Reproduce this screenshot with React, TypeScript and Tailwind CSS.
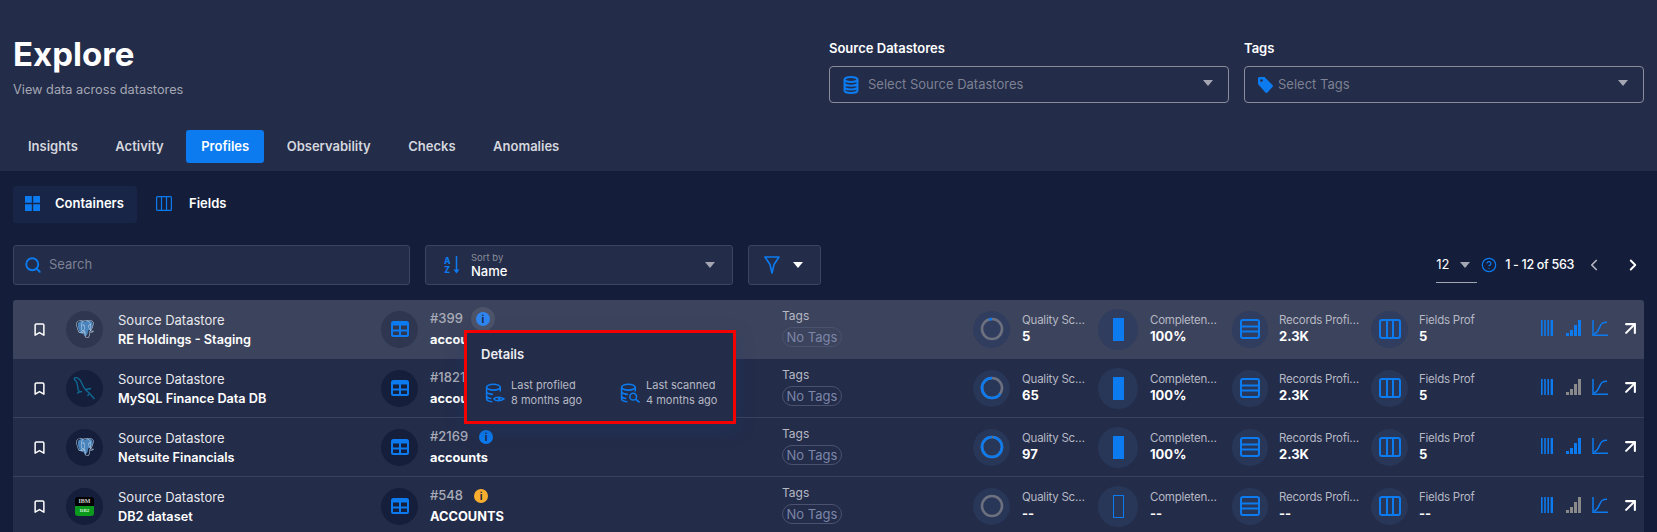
import { Bookmark, ChevronLeft, ChevronRight, CircleHelp, Search, ArrowUpRight } from 'lucide-react';
import { SiPostgresql } from 'react-icons/si';
import { ReactNode } from 'react';

const font = { fontFamily: 'Inter, sans-serif' };

function Caret({ className = 'border-t-[#a4a7b3]' }: { className?: string }) {
  return <span className={`inline-block w-0 h-0 border-x-[5px] border-x-transparent border-t-[6px] ${className}`} />;
}

function Db2Logo() {
  return (
    <div className="w-[19px] h-[19px] rounded-[3px] overflow-hidden flex flex-col text-center font-bold leading-[9px] font-['Liberation_Serif',serif]">
      <div className="h-[9px] bg-black text-[6px] text-[#cfcfcf]">IBM</div>
      <div className="h-[10px] bg-[#0b9a1e] text-[5px] text-[#d8f0d8]">DB2</div>
    </div>
  );
}

function PostgresLogo() {
  return (
    <div className="relative w-[18px] h-[18px]">
      <svg width="18" height="18" viewBox="0 0 18 18" fill="#4a84bd" className="absolute inset-0">
        <path d="M2 3c2-2.500 5-2.500 7-1.500 2-1 5-1 7 .5 1.500 2 .5 5-1 7-1 1-2 1.500-3 1.500 0 2.500-.5 5-2.500 5.500-1.500 0-2-1.500-2-3-1 1-2.500 1-3.500-.5-1.500-2-2.500-6-2-9.500z" />
      </svg>
      <SiPostgresql size={18} color="#b9cfe4" className="absolute inset-0" />
    </div>
  );
}

function MysqlLogo() {
  return (
    <svg width="23" height="24" viewBox="0 0 23 24" fill="none" stroke="#0f6a94" strokeWidth="1.300">
      <path d="M1 2.500C2.500 .8 5 1.500 7 4c2 2.500 2.500 6 5 9 1.500 2 4 3.500 5.500 5.500l4 4.500" />
      <path d="M1 2.500c.500 1.500 2 2 2.800 4 1 3 .7 6 2.200 9.500M6 16l-1.800 1.500M6 16l3-.5" />
      <path d="M13 13.500l5-1M16 18l-1.500 2" />
    </svg>
  );
}

function TableIcon() {
  return (
    <svg width="18" height="16" viewBox="0 0 18 16" fill="none" stroke="#0c7bf0" strokeWidth="2">
      <rect x="1" y="1" width="16" height="14" rx="1.500" />
      <path d="M1 3h16" strokeWidth="3" />
      <path d="M1 9.500h16M9 4v11" />
    </svg>
  );
}

function RecordsIcon() {
  return (
    <svg width="20" height="20" viewBox="0 0 20 20" fill="none" stroke="#0c7bf0" strokeWidth="2">
      <rect x="1" y="1" width="18" height="18" rx="2" />
      <path d="M1 7.500h18M1 12.500h18" />
    </svg>
  );
}

function ColumnsIcon() {
  return (
    <svg width="22" height="20" viewBox="0 0 22 20" fill="none" stroke="#0c7bf0" strokeWidth="2">
      <rect x="1" y="1" width="20" height="18" rx="2" />
      <path d="M8 1v18M14 1v18" />
    </svg>
  );
}

function Ring({ value }: { value: number }) {
  const c = 2 * Math.PI * 10;
  return (
    <svg width="24" height="24" viewBox="0 0 24 24" fill="none" strokeWidth="2.600">
      <circle cx="12" cy="12" r="10" stroke="#6d717f" />
      <circle cx="12" cy="12" r="10" stroke="#0c7bf0" strokeDasharray={`${(c * value) / 100} ${c}`} transform="rotate(-90 12 12) scale(1 -1) translate(0 -24)" />
    </svg>
  );
}

function Stat({ icon, label, value, circle, text, clip }: { icon: ReactNode; label: string; value: string; circle: string; text: string; clip?: boolean }) {
  return (
    <div className="flex items-center shrink-0 w-full">
      <div className={`rounded-full bg-[#2b3a5f]/70 flex items-center justify-center shrink-0 ${circle}`}>{icon}</div>
      <div className={`min-w-0 -mt-[2px] ${text}`}>
        <div className={`text-[11.500px] tracking-[-0.02em] leading-[16px] text-[#b6b9c4] whitespace-nowrap overflow-hidden ${clip ? '' : 'truncate'}`}>{label}</div>
        <div className="text-[13px] leading-[16px] font-bold text-white">{value}</div>
      </div>
    </div>
  );
}

type RowData = {
  logo: ReactNode;
  name: string;
  id: string;
  table: string;
  info: string;
  infoGap: string;
  quality: number;
  qualityText: string;
  complete: boolean;
  records: string;
  fields: string;
  signal: string;
  active?: boolean;
};

const rows: RowData[] = [
  { logo: <PostgresLogo />, name: 'RE Holdings - Staging', id: '#399', table: 'accounts', info: '#2f86f0', infoGap: 'ml-[8px]', quality: 5, qualityText: '5', complete: true, records: '2.3K', fields: '5', signal: '#0c7bf0', active: true },
  { logo: <MysqlLogo />, name: 'MySQL Finance Data DB', id: '#1821', table: 'accounts', info: '#0c7bf0', infoGap: 'ml-[6px]', quality: 65, qualityText: '65', complete: true, records: '2.3K', fields: '5', signal: '#8a8a8a' },
  { logo: <PostgresLogo />, name: 'Netsuite Financials', id: '#2169', table: 'accounts', info: '#0c7bf0', infoGap: 'ml-[6px]', quality: 97, qualityText: '97', complete: true, records: '2.3K', fields: '5', signal: '#0c7bf0' },
  { logo: <Db2Logo />, name: 'DB2 dataset', id: '#548', table: 'ACCOUNTS', info: '#f9ad2e', infoGap: 'ml-[6px]', quality: 0, qualityText: '--', complete: false, records: '--', fields: '--', signal: '#8a8a8a' },
];

function InfoDot({ color, active }: { color: string; active?: boolean }) {
  return (
    <span className={`w-[24px] h-[24px] rounded-full flex items-center justify-center ${active ? 'bg-[#4d5369]' : ''}`}>
      <span className="w-[14px] h-[14px] rounded-full flex items-center justify-center text-[10px] font-bold leading-none text-[#1d2440]" style={{ backgroundColor: color }}>
        i
      </span>
    </span>
  );
}

function RowActions({ signal }: { signal: string }) {
  return (
    <div className="flex items-center ml-auto mr-[3px] -mt-[2px]">
      <svg width="12" height="16" viewBox="0 0 12 16" fill="#0c7bf0" className="mr-[13px]">
        <path d="M0 0h1.600v16H0zM3.200 0h1.600v16H3.200zM6.400 0h1.600v16H6.400zM9.600 0H12v16H9.600z" />
      </svg>
      <svg width="15" height="16" viewBox="0 0 15 16" fill={signal} className="mr-[11px]">
        <path d="M0 13h3v3H0zM4 10h3v6H4zM8 5h3v11H8zM12 0h3v16h-3z" />
      </svg>
      <svg width="16" height="16" viewBox="0 0 16 16" fill="none" stroke="#0c7bf0" strokeWidth="1.500" className="mr-[12px]">
        <path d="M1 0v15.200h15" />
        <path d="M2 14c5-1 5-8 8-10.500 1.500-1 3-1.200 5-1.200" />
      </svg>
      <ArrowUpRight size={21} strokeWidth={2.400} color="#ffffff" />
    </div>
  );
}

function Row({ data }: { data: RowData }) {
  const circleBg = data.active ? 'bg-[#2f3750]' : 'bg-[#151f3c]';
  return (
    <div className={`h-[59px] flex items-center border-b border-[#3a4260] ${data.active ? 'bg-[#3c435c]' : 'bg-[#232c49]'}`}>
      <Bookmark size={15} strokeWidth={2.400} color="#ffffff" className="ml-[19px] shrink-0" />
      <div className={`w-[37px] h-[37px] rounded-full ml-[19px] flex items-center justify-center shrink-0 ${circleBg}`}>{data.logo}</div>
      <div className="w-[263px] ml-[15px] pt-[2px] shrink-0">
        <div className="text-[13px] leading-[18px] text-[#e8e9ee]">Source Datastore</div>
        <div className="text-[12.700px] leading-[18px] mt-[2px] font-semibold text-white">{data.name}</div>
      </div>
      <div className={`w-[37px] h-[37px] rounded-full flex items-center justify-center shrink-0 ${circleBg}`}>
        <TableIcon />
      </div>
      <div className="w-[352px] ml-[12px] shrink-0">
        <div className="flex items-center h-[24px] -mt-[3px]">
          <span className="text-[13px] font-medium text-[#a9acb8]">{data.id}</span>
          <span className={data.infoGap}>
            <InfoDot color={data.info} active={data.active} />
          </span>
        </div>
        <div className="text-[12.800px] leading-[18px] font-bold text-white">{data.table}</div>
      </div>
      <div className="w-[191px] shrink-0 -mt-[3px]">
        <div className="text-[12px] leading-[16px] text-[#b6b9c4]">Tags</div>
        <span className="inline-block mt-[1px] w-[60px] h-[20px] rounded-full border border-[#4a5270] text-center text-[13px] leading-[18px] text-[#7c86a8] whitespace-nowrap">No Tags</span>
      </div>
      <div className="w-[125px] shrink-0">
        <Stat circle="w-[37px] h-[37px]" text="ml-[12px] w-[67px]" icon={<Ring value={data.quality} />} label="Quality Score" value={data.qualityText} />
      </div>
      <div className="w-[134px] shrink-0">
        <Stat
          circle="w-[40px] h-[41px]"
          text="ml-[12px] w-[72px]"
          icon={<span className={`block w-[11px] h-[23px] border border-[#0c7bf0] ${data.complete ? 'bg-[#0c7bf0]' : ''}`} />}
          label="Completeness"
          value={data.complete ? '100%' : '--'}
        />
      </div>
      <div className="w-[139px] shrink-0">
        <Stat circle="w-[36px] h-[37px]" text="ml-[11px] w-[81px]" icon={<RecordsIcon />} label="Records Profiled" value={data.records} />
      </div>
      <div className="w-[104px] shrink-0">
        <Stat clip circle="w-[37px] h-[37px]" text="ml-[11px] w-[56px]" icon={<ColumnsIcon />} label="Fields Profiled" value={data.fields} />
      </div>
      <RowActions signal={data.signal} />
    </div>
  );
}

function DbIcon({ children }: { children: ReactNode }) {
  return (
    <svg width="20" height="20" viewBox="0 0 19 19" fill="none" stroke="#0c7bf0" strokeWidth="1.500" className="shrink-0">
      <ellipse cx="8" cy="4" rx="6.500" ry="2.800" />
      <path d="M1.500 4v11c0 1.500 2.500 2.600 5.500 2.800M14.500 4v4M1.500 8c0 1.500 3 2.800 6 2.800M1.500 12c0 1.300 2 2.400 4.500 2.700" />
      {children}
    </svg>
  );
}

function DetailItem({ icon, title, time }: { icon: ReactNode; title: string; time: string }) {
  return (
    <div className="flex items-center w-[135px] shrink-0 ml-[4px] -mr-[4px]">
      {icon}
      <div className="ml-[6px] text-[11px] leading-[15px] text-[#b6b9c4] whitespace-nowrap">
        <div>{title}</div>
        <div>{time}</div>
      </div>
    </div>
  );
}

function SelectBox({ icon, placeholder }: { icon: ReactNode; placeholder: string }) {
  return (
    <div className="h-[37px] flex items-center rounded-[4px] border border-[#8a8d99] pl-[13px] pr-[15px]">
      {icon}
      <span className="ml-[9px] text-[13px] text-[#7d8192]">{placeholder}</span>
      <span className="ml-auto flex -mt-[3px]">
        <Caret />
      </span>
    </div>
  );
}

export default function App() {
  return (
    <div className="h-[532px] w-[1657px] overflow-hidden bg-[#141e3a] relative" style={font}>
      <header className="h-[171px] bg-[#232c49] px-[13px] flex flex-col">
        <div className="flex h-[130px] shrink-0">
          <div className="pt-[32px]">
            <h1 className="text-[33px] leading-[44px] font-bold text-white">Explore</h1>
            <p className="text-[12.750px] leading-[18px] mt-[5px] text-[#a4a7b3]">View data across datastores</p>
          </div>
          <div className="ml-auto flex gap-[15px] pt-[39px]">
            <div className="w-[400px]">
              <div className="text-[13px] leading-[18px] mb-[9px] font-semibold text-white">Source Datastores</div>
              <SelectBox
                placeholder="Select Source Datastores"
                icon={
                  <svg width="16" height="18" viewBox="0 0 16 18" fill="none" stroke="#0c7bf0" strokeWidth="2">
                    <ellipse cx="8" cy="3.500" rx="6.500" ry="2.500" />
                    <path d="M1.500 3.500v11c0 1.400 2.900 2.500 6.500 2.500s6.500-1.100 6.500-2.500v-11M1.500 7.200c0 1.400 2.900 2.500 6.500 2.500s6.500-1.100 6.500-2.500M1.500 11c0 1.400 2.900 2.500 6.500 2.500s6.500-1.100 6.500-2.500" />
                  </svg>
                }
              />
            </div>
            <div className="w-[400px]">
              <div className="text-[13px] leading-[18px] mb-[9px] font-semibold text-white">Tags</div>
              <SelectBox
                placeholder="Select Tags"
                icon={
                  <svg width="15" height="16" viewBox="0 0 15 16" fill="#0c7bf0" className="-mr-[4px]">
                    <path d="M0 1.500C0 .700.700 0 1.500 0H6c.400 0 .800.200 1 .400l7.500 7.500c.600.600.600 1.500 0 2.100l-5 5.500c-.600.600-1.500.600-2.100 0L.400 7.500C.200 7.200 0 6.900 0 6.500z" />
                    <circle cx="3.500" cy="3.500" r="1.300" fill="#232c49" />
                  </svg>
                }
              />
            </div>
          </div>
        </div>
        <nav className="flex items-center gap-[7.500px] text-[13px] font-semibold text-[#d5d7de]">
          {['Insights', 'Activity', 'Profiles', 'Observability', 'Checks', 'Anomalies'].map((t) => (
            <span key={t} className={`h-[33px] px-[15px] flex items-center rounded-[3px] ${t === 'Profiles' ? 'bg-[#0c7bf0] text-white' : ''}`}>
              {t}
            </span>
          ))}
        </nav>
      </header>

      <main className="px-[13px]">
        <div className="flex items-center pt-[15px] gap-[5px]">
          <div className="h-[37px] w-[124px] rounded-[3px] bg-[#182546] flex items-center pl-[12px] pb-[2px]">
            <svg width="15" height="15" viewBox="0 0 15 15" fill="#0c7bf0">
              <path d="M0 0h6.800v6.800H0zM8.200 0H15v6.800H8.200zM0 8.200h6.800V15H0zM8.200 8.200H15V15H8.200z" />
            </svg>
            <span className="ml-[15px] text-[13px] font-semibold text-white">Containers</span>
          </div>
          <div className="h-[37px] flex items-center pl-[14px] pb-[2px]">
            <svg width="16" height="15" viewBox="0 0 16 15" fill="none" stroke="#0c7bf0" strokeWidth="1.200">
              <rect x=".6" y=".6" width="14.800" height="13.800" rx="1" />
              <path d="M5.500 .6v13.800M10.500 .6v13.800" />
            </svg>
            <span className="ml-[17px] text-[13px] font-semibold text-white">Fields</span>
          </div>
        </div>

        <div className="flex items-center mt-[22px] h-[40px]">
          <div className="w-[397px] h-[40px] rounded-[3px] border border-[#3b4464] bg-[#232c49] flex items-center pl-[10px]">
            <Search size={18} strokeWidth={2.500} color="#0c7bf0" />
            <span className="ml-[7px] text-[13px] text-[#7d8192]">Search</span>
          </div>
          <div className="w-[308px] h-[40px] ml-[15px] rounded-[3px] border border-[#3b4464] bg-[#232c49] flex items-center pl-[18px] pr-[17px]">
            <svg width="18" height="18" viewBox="0 0 18 18" fill="none" className="shrink-0">
              <path d="M12.500 0v15" stroke="#0c7bf0" strokeWidth="1.500" />
              <path d="M9.500 13.500h6l-3 4z" fill="#0c7bf0" />
              <text x="0" y="7.500" fontSize="8.500" fontWeight="800" fill="#0c7bf0" fontFamily="Inter, sans-serif">A</text>
              <text x=".3" y="17" fontSize="8.500" fontWeight="800" fill="#0c7bf0" fontFamily="Inter, sans-serif">Z</text>
            </svg>
            <div className="ml-[9px]">
              <div className="text-[9.500px] leading-[12px] text-[#8a8d99]">Sort by</div>
              <div className="text-[13px] leading-[15px] font-medium text-white">Name</div>
            </div>
            <span className="ml-auto flex">
              <Caret />
            </span>
          </div>
          <div className="w-[73px] h-[40px] ml-[15px] rounded-[3px] border border-[#3b4464] bg-[#232c49] flex items-center pl-[15px]">
            <svg width="16" height="18" viewBox="0 0 16 18" fill="none" stroke="#0c7bf0" strokeWidth="1.600">
              <path d="M1 1h14L10 8.500 8 17 6 8.500z" strokeLinejoin="round" />
            </svg>
            <span className="ml-[13px] flex">
              <Caret className="border-t-white" />
            </span>
          </div>
          <div className="ml-auto flex items-center h-[40px]">
            <div className="w-[41px] h-[36px] border-b border-[#a4a7b3] flex items-center">
              <span className="text-[13px] text-white">12</span>
              <span className="ml-[11px] flex">
                <Caret />
              </span>
            </div>
            <CircleHelp size={16} strokeWidth={1.800} color="#0c7bf0" className="ml-[4px]" />
            <span className="ml-[8px] text-[12.500px] font-medium tracking-tight text-white whitespace-nowrap">1 - 12 of 563</span>
            <ChevronLeft size={18} strokeWidth={2.200} color="#b6b9c4" className="ml-[11px]" />
            <ChevronRight size={18} strokeWidth={2.500} color="#ffffff" className="ml-[21px] mr-[2px]" />
          </div>
        </div>

        <div className="mt-[15px] rounded-t-[3px] overflow-hidden">
          {rows.map((r) => (
            <Row key={r.id} data={r} />
          ))}
        </div>
      </main>

      <div className="absolute left-[464px] top-[330px] w-[272px] h-[94px] border-[3px] border-[#f50000] bg-[#232c49] pl-[14px] pt-[12px] shadow-[0_6px_16px_rgba(30,60,120,0.35)]">
        <div className="text-[13px] leading-[18px] font-semibold text-[#eceef2]">Details</div>
        <div className="flex mt-[15px]">
          <DetailItem
            title="Last profiled"
            time="8 months ago"
            icon={
              <DbIcon>
                <path d="M8.500 15c1.500-2 6.500-2 9.500 0-3 2.500-8 2.500-9.500 0z" fill="#232c49" />
                <circle cx="13.500" cy="15" r="1.300" fill="#0c7bf0" stroke="none" />
              </DbIcon>
            }
          />
          <DetailItem
            title="Last scanned"
            time="4 months ago"
            icon={
              <DbIcon>
                <circle cx="12.500" cy="13" r="3.200" />
                <path d="M15 15.500l3.500 3" />
              </DbIcon>
            }
          />
        </div>
      </div>
    </div>
  );
}
